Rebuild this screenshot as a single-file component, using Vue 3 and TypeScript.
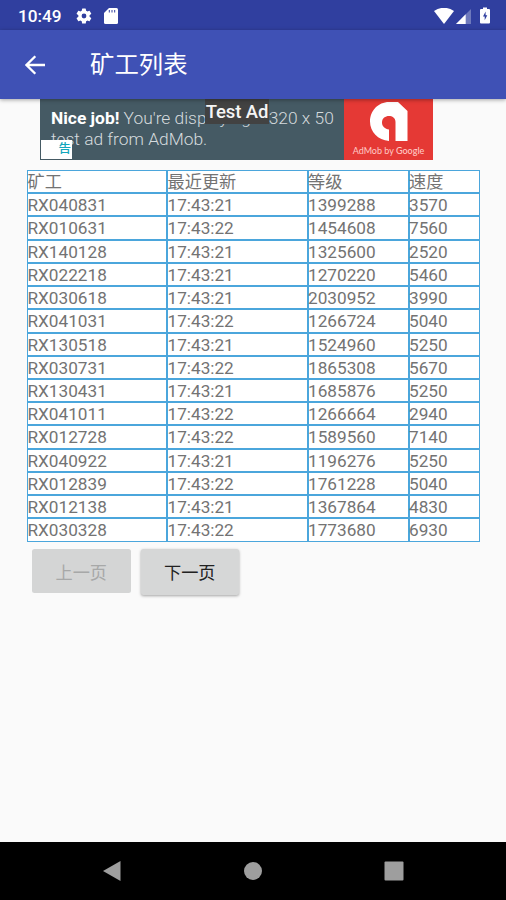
<script setup lang="ts">
interface Miner {
  name: string
  updated: string
  level: number
  speed: number
}

const headers: string[] = ['矿工', '最近更新', '等级', '速度']

const miners: Miner[] = [
  { name: 'RX040831', updated: '17:43:21', level: 1399288, speed: 3570 },
  { name: 'RX010631', updated: '17:43:22', level: 1454608, speed: 7560 },
  { name: 'RX140128', updated: '17:43:21', level: 1325600, speed: 2520 },
  { name: 'RX022218', updated: '17:43:21', level: 1270220, speed: 5460 },
  { name: 'RX030618', updated: '17:43:21', level: 2030952, speed: 3990 },
  { name: 'RX041031', updated: '17:43:22', level: 1266724, speed: 5040 },
  { name: 'RX130518', updated: '17:43:21', level: 1524960, speed: 5250 },
  { name: 'RX030731', updated: '17:43:22', level: 1865308, speed: 5670 },
  { name: 'RX130431', updated: '17:43:21', level: 1685876, speed: 5250 },
  { name: 'RX041011', updated: '17:43:22', level: 1266664, speed: 2940 },
  { name: 'RX012728', updated: '17:43:22', level: 1589560, speed: 7140 },
  { name: 'RX040922', updated: '17:43:21', level: 1196276, speed: 5250 },
  { name: 'RX012839', updated: '17:43:22', level: 1761228, speed: 5040 },
  { name: 'RX012138', updated: '17:43:21', level: 1367864, speed: 4830 },
  { name: 'RX030328', updated: '17:43:22', level: 1773680, speed: 6930 },
]
</script>

<template>
  <div class="screen">
    <header class="status-bar">
      <span class="clock">10:49</span>
      <svg class="gear" viewBox="0 0 24 24">
        <path d="M19.4 13a7.6 7.6 0 0 0 0-2l2.1-1.6a.5.5 0 0 0 .1-.6l-2-3.5a.5.5 0 0 0-.6-.2l-2.5 1a7.300 7.300 0 0 0-1.700-1l-.4-2.600a.5.5 0 0 0-.5-.4h-4a.5.5 0 0 0-.5.4L9 5.100a7.700 7.700 0 0 0-1.700 1l-2.500-1a.5.5 0 0 0-.6.2l-2 3.500a.5.5 0 0 0 .1.600L4.500 11a7.600 7.600 0 0 0 0 2l-2.200 1.600a.5.5 0 0 0-.1.600l2 3.500c.1.200.4.300.6.200l2.500-1a7.300 7.300 0 0 0 1.700 1l.4 2.600c0 .2.2.4.5.4h4c.3 0 .5-.2.5-.4l.4-2.600a7.700 7.700 0 0 0 1.700-1l2.500 1c.2.100.5 0 .6-.2l2-3.500a.5.5 0 0 0-.1-.600zM12 15.200a3.200 3.200 0 1 1 0-6.400 3.200 3.200 0 0 1 0 6.400z" />
      </svg>
      <svg class="sd-card" viewBox="0 0 14 16">
        <path d="M5 0h7.500Q14 0 14 1.500v13q0 1.500-1.500 1.500h-11Q0 16 0 14.500V5z" />
        <path class="slots" d="M5.300 2v2.500M8 2v2.500M10.700 2v2.500" />
      </svg>
      <span class="spacer"></span>
      <svg class="wifi" viewBox="0 0 20 16">
        <path d="M0 3Q10-3.500 20 3L10 16z" />
      </svg>
      <svg class="signal" viewBox="0 0 15 15">
        <path class="faint" d="M15 0v15H0z" />
        <path d="M9.700 5.300V15H0z" />
      </svg>
      <svg class="battery" viewBox="0 0 10 16">
        <path d="M3 0h4v1.500h2q1 0 1 1V15q0 1-1 1H1q-1 0-1-1V2.500q0-1 1-1h2z" />
        <path class="bolt" d="M5.600 4L3 8.900h1.700v3.800l2.600-5H5.600z" />
      </svg>
    </header>

    <nav class="toolbar">
      <svg class="back" viewBox="0 0 20 20">
        <path d="M20 10H1.800M10.300 1.200L1.500 10l8.800 8.800" />
      </svg>
      <h1>矿工列表</h1>
    </nav>

    <main>
      <section class="ad">
        <p class="ad-copy"><b>Nice job!</b> You're displaying a 320 x 50<br />test ad from AdMob.</p>
        <div class="admob">
          <svg viewBox="0 0 38 40">
            <path d="M19 39C8 38 0 30 0 19.500S8 0 19 0h9l9.500 9v30h-12V20C25.500 12 12 12 12 20.500c0 4 3 6.500 7 7z" />
          </svg>
          <span>AdMob by <b>Google</b></span>
        </div>
        <span class="test-label">Test Ad</span>
        <span class="ad-choice">告</span>
      </section>

      <div class="table">
        <div class="row">
          <span v-for="header in headers" :key="header" class="cell">{{ header }}</span>
        </div>
        <div v-for="miner in miners" :key="miner.name" class="row">
          <span class="cell">{{ miner.name }}</span>
          <span class="cell">{{ miner.updated }}</span>
          <span class="cell">{{ miner.level }}</span>
          <span class="cell">{{ miner.speed }}</span>
        </div>
      </div>

      <div class="pager">
        <button type="button" disabled>上一页</button>
        <button type="button">下一页</button>
      </div>
    </main>

    <footer class="system-nav">
      <svg viewBox="0 0 20 22"><path d="M18.500 1v20L1 11z" /></svg>
      <svg viewBox="0 0 20 22"><circle cx="10" cy="11" r="9" /></svg>
      <svg viewBox="0 0 20 22"><rect x="0.500" y="1.500" width="19" height="19" rx="1" /></svg>
    </footer>
  </div>
</template>

<style>
body {
  margin: 0;
}
</style>

<style scoped>
* {
  box-sizing: border-box;
}

.screen {
  display: flex;
  flex-direction: column;
  width: 506px;
  height: 900px;
  overflow: hidden;
  background: #fafafa;
  font-family: Roboto, 'Noto Sans CJK SC', sans-serif;
}

svg {
  display: block;
  flex: none;
  fill: #fff;
}

.status-bar {
  display: flex;
  align-items: center;
  height: 30px;
  padding: 1px 16px 0 18px;
  background: #303f9f;
  color: #fff;
}

.clock {
  width: 57px;
  font-size: 17.2px;
  font-weight: 500;
}

.gear {
  width: 18px;
  height: 18px;
}

.sd-card {
  width: 14px;
  height: 16px;
  margin-left: 11px;
}

.slots {
  fill: none;
  stroke: #303f9f;
  stroke-width: 1;
}

.spacer {
  flex: 1;
}

.wifi {
  width: 20px;
  height: 16px;
}

.signal {
  width: 15px;
  height: 15px;
  margin: 1px 9px 0 2px;
}

.faint {
  opacity: 0.3;
}

.battery {
  width: 10px;
  height: 17px;
}

.bolt {
  fill: #303f9f;
}

.toolbar {
  display: flex;
  flex: none;
  align-items: center;
  height: 69px;
  padding-left: 25px;
  background: #3f51b5;
  box-shadow: 0 1px 4px rgba(0, 0, 0, 0.35);
  z-index: 1;
}

.back {
  width: 20px;
  height: 20px;
}

.back path {
  fill: none;
  stroke: #fff;
  stroke-width: 2.300;
}

h1 {
  margin: 0 0 0 45px;
  color: #fff;
  font-size: 24.400px;
  font-weight: 400;
  line-height: 36px;
}

main {
  flex: 1;
}

.ad {
  position: relative;
  display: flex;
  width: 393px;
  height: 61px;
  margin-left: 40px;
  background: #455a64;
}

.ad-copy {
  width: 304px;
  margin: 0;
  padding: 9px 0 0 11px;
  color: #d5dbde;
  font-size: 17.380px;
  font-weight: 300;
  line-height: 21px;
  white-space: nowrap;
}

.ad-copy b {
  color: #fff;
  font-weight: 700;
}

.admob {
  display: flex;
  flex: 1;
  flex-direction: column;
  align-items: center;
  padding-top: 3px;
  background: #e53935;
  color: #ffc9c5;
  font-family: Lato, sans-serif;
  font-size: 9px;
  line-height: 11px;
  white-space: nowrap;
}

.admob b {
  font-weight: 500;
}

.admob svg {
  width: 38px;
  height: 40px;
  margin-bottom: 3px;
}

.test-label {
  position: absolute;
  top: 0;
  left: 165px;
  width: 64px;
  height: 25px;
  background: #424242;
  color: #f5f5f5;
  font-size: 18.500px;
  font-weight: 500;
  letter-spacing: -0.1px;
  line-height: 27px;
  text-align: center;
  white-space: nowrap;
}

.ad-choice {
  position: absolute;
  bottom: 1px;
  left: 1px;
  width: 31px;
  height: 19px;
  padding-right: 1px;
  background: #fff;
  color: #13a7bd;
  font-size: 12.500px;
  font-weight: 500;
  line-height: 17px;
  text-align: right;
}

.table {
  display: flex;
  flex-direction: column;
  width: 453px;
  height: 371.500px;
  margin: 10px 0 0 27px;
}

.row {
  display: grid;
  flex: 1 1 0;
  grid-template-rows: 100%;
  grid-template-columns: 140px 140.500px 101px 71.500px;
  min-height: 0;
}

.cell {
  min-height: 0;
  border: 1px solid #4ba6dc;
  background: #fff;
  color: #737373;
  font-size: 17.200px;
  line-height: 22px;
  text-indent: -0.5px;
  white-space: nowrap;
}

.pager {
  display: flex;
  gap: 10px;
  align-items: flex-start;
  padding: 7.500px 0 0 32px;
}

button {
  width: 98.500px;
  height: 45.500px;
  padding: 0;
  border: 0;
  border-radius: 2.500px;
  background: #d6d7d7;
  box-shadow: 0 1px 3px rgba(0, 0, 0, 0.35);
  color: #212121;
  font-family: inherit;
  font-size: 17.200px;
  font-weight: 400;
}

button:disabled {
  height: 44px;
  background: #d4d5d5;
  box-shadow: none;
  color: #a7a8a8;
}

.system-nav {
  display: flex;
  flex: none;
  gap: 121px;
  align-items: center;
  justify-content: center;
  height: 58px;
  background: #000;
}

.system-nav svg {
  width: 20px;
  height: 22px;
  fill: #9e9e9e;
}
</style>
